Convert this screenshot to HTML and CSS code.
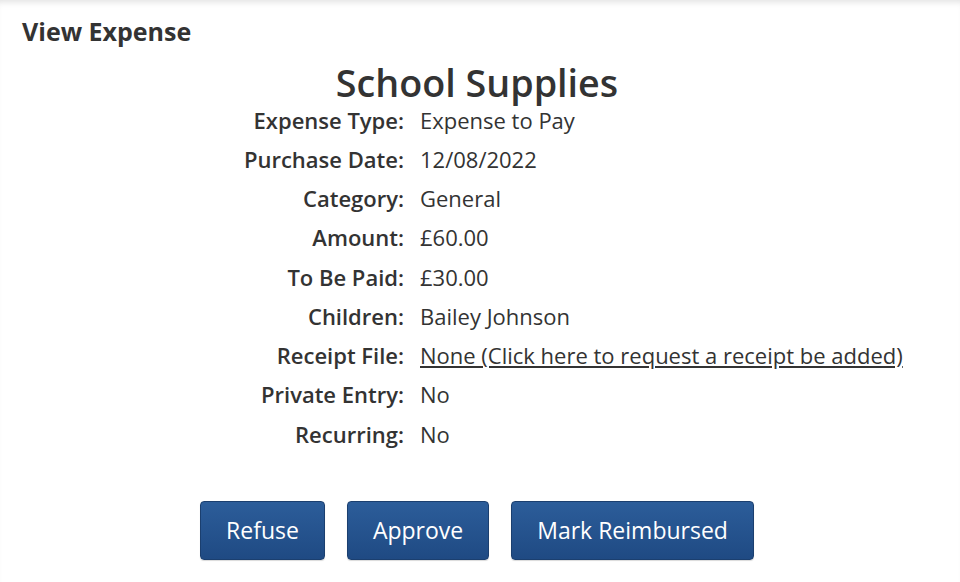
FILE: index.html
```html
<!DOCTYPE html>
<html>
<head>
<meta charset="utf-8">
<link rel="stylesheet" href="styles.css">
</head>
<body>
<div class="page">
  <h1 class="page-title">View Expense</h1>
  <section class="expense">
    <h2 class="expense-name">School Supplies</h2>
    <dl class="details">
      <dt>Expense Type:</dt><dd>Expense to Pay</dd>
      <dt>Purchase Date:</dt><dd>12/08/2022</dd>
      <dt>Category:</dt><dd>General</dd>
      <dt>Amount:</dt><dd>£60.00</dd>
      <dt>To Be Paid:</dt><dd>£30.00</dd>
      <dt>Children:</dt><dd>Bailey Johnson</dd>
      <dt>Receipt File:</dt><dd><a class="link" href="#">None (Click here to request a receipt be added)</a></dd>
      <dt>Private Entry:</dt><dd>No</dd>
      <dt>Recurring:</dt><dd>No</dd>
    </dl>
    <div class="actions">
      <button class="btn">Refuse</button>
      <button class="btn">Approve</button>
      <button class="btn">Mark Reimbursed</button>
    </div>
  </section>
</div>
</body>
</html>
```
FILE: styles.css
```css
html, body {
  margin: 0;
  padding: 0;
  background: #fff;
}
body {
  font-family: "Open Sans", "Liberation Sans", sans-serif;
  color: #333;
  width: 960px;
  height: 582px;
  overflow: hidden;
}
.page {
  min-height: 582px;
  box-shadow: inset 0 6px 6px -4px rgba(0,0,0,0.12);
  padding: 15px 0 0 22px;
  box-sizing: border-box;
}
.page-title {
  margin: 0;
  font-size: 25px;
  font-weight: 700;
  line-height: 32px;
  color: #333;
}
.expense {
  display: flex;
  flex-direction: column;
  align-items: center;
  margin-left: -22px;
  width: 954px;
}
.expense-name {
  margin: 19px 0 0 0;
  font-size: 37.7px;
  font-weight: 600;
  line-height: 34px;
  color: #333;
}
.details {
  display: grid;
  grid-template-columns: 404px 1fr;
  column-gap: 16px;
  width: 954px;
  margin: 0.5px 0 0 0;
  font-size: 22px;
  line-height: 39.25px;
}
.details dt {
  text-align: right;
  font-weight: 600;
}
.details dd {
  margin: 0;
}
.link {
  color: #333;
  text-decoration: underline;
}
.actions {
  display: flex;
  gap: 22px;
  margin-top: 47px;
}
.btn {
  font-family: "Open Sans", "Liberation Sans", sans-serif;
  font-size: 23px;
  font-weight: 500;
  color: #fff;
  height: 59px;
  padding: 0 25px;
  border: 1px solid #1b3f6f;
  border-radius: 4px;
  background: linear-gradient(#2c5d9a, #1f4a83);
  box-shadow: 0 1px 1px rgba(0,0,0,0.15);
}
```
